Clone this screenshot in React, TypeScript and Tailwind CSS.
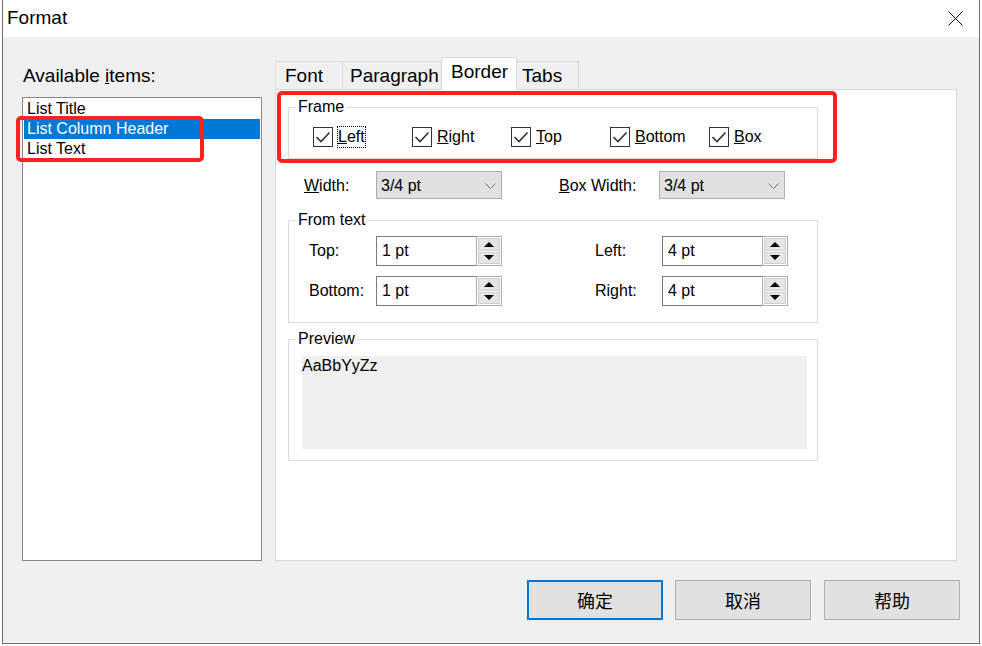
import React from "react";

const sans = "font-['Liberation_Sans',Arial,sans-serif]";

const Check = () => (
  <div className="w-[20px] h-[20px] border border-[#333333] bg-white flex items-center justify-center">
    <svg width="18" height="18" viewBox="0 0 18 18">
      <path d="M2.5 9 L7 13.5 L15.5 4.5" fill="none" stroke="#333333" strokeWidth="1.6" />
    </svg>
  </div>
);

const CheckItem = ({ first, rest, focus }: { first: string; rest: string; focus?: boolean }) => (
  <div className="flex items-center w-[99px]">
    <Check />
    {focus ? (
      <span className="ml-[4px] border border-dotted border-black leading-[20px] text-[16px]">
        <u>{first}</u>
        {rest}
      </span>
    ) : (
      <span className="ml-[5px] leading-[20px] text-[16px]">
        <u>{first}</u>
        {rest}
      </span>
    )}
  </div>
);

const Chevron = () => (
  <svg width="11" height="6" viewBox="0 0 11 6">
    <path d="M0.5 0.5 L5.5 5.5 L10.5 0.5" fill="none" stroke="#707070" strokeWidth="1" />
  </svg>
);

const Dropdown = ({ value }: { value: string }) => (
  <div className="w-[126px] h-[28px] bg-[#e1e1e1] border border-[#adadad] flex items-center justify-between pl-[4px] pr-[5px] pt-[2px] text-[16px]">
    <span>{value}</span>
    <Chevron />
  </div>
);

const Spin = ({ value }: { value: string }) => (
  <div className="w-[126px] h-[30px] flex">
    <div className="flex-1 border border-r-0 border-[#7a7a7a] bg-white flex items-center pl-[5px] text-[16px]">
      {value}
    </div>
    <div className="w-[26px] border border-[#adadad] bg-white flex flex-col p-[1px] gap-[1px]">
      <div className="flex-1 bg-[#e5e5e5] border border-[#cfcfcf] flex items-center justify-center">
        <svg width="10" height="5" viewBox="0 0 10 5">
          <path d="M0 5 L5 0 L10 5 Z" fill="#000" />
        </svg>
      </div>
      <div className="flex-1 bg-[#e5e5e5] border border-[#cfcfcf] flex items-center justify-center">
        <svg width="10" height="5" viewBox="0 0 10 5">
          <path d="M0 0 L10 0 L5 5 Z" fill="#000" />
        </svg>
      </div>
    </div>
  </div>
);

const Group = ({ label, className, children }: { label: string; className: string; children: React.ReactNode }) => (
  <div className={`relative ml-[12px] w-[530px] border border-[#dcdcdc] ${className}`}>
    <span className="absolute left-[7px] top-[-11px] px-[2px] bg-white text-[16px] leading-[20px]">{label}</span>
    {children}
  </div>
);

const App = () => {
  const tabs = [
    { name: "Font", cls: "w-[67px] h-[28px] pl-[9px] pt-[2px] border-l border-t bg-[#f0f0f0]" },
    { name: "Paragraph", cls: "w-[99px] h-[28px] pl-[7px] pt-[2px] border-l border-t bg-[#f0f0f0]" },
    { name: "Border", cls: "w-[76px] h-[33px] pl-[9px] pb-[3px] border-l border-t border-r bg-white -mb-px relative z-10" },
    { name: "Tabs", cls: "w-[62px] h-[28px] pl-[5px] pt-[2px] border-t border-r bg-[#f0f0f0]" },
  ];

  return (
    <div className={`relative w-[982px] h-[646px] bg-white overflow-hidden text-black ${sans}`}>
      <div className="ml-[2px] w-[978px] h-[644px] border-l border-r border-b border-[#707070] flex flex-col">
        {/* title bar */}
        <div className="h-[37px] bg-white flex items-center justify-between pl-[4px] pr-[16px]">
          <span className="text-[19px]">Format</span>
          <svg width="15" height="15" viewBox="0 0 15 15">
            <path d="M0.5 0.5 L14.5 14.5 M14.5 0.5 L0.5 14.5" stroke="#000" strokeWidth="1" />
          </svg>
        </div>

        <div className="flex-1 bg-[#f0f0f0] flex flex-col">
          <div className="flex pt-[20px]">
            {/* left column */}
            <div className="ml-[19px] w-[240px] flex flex-col">
              <div className="mt-[9px] h-[20px] leading-[20px] text-[19px] pl-[1px]">
                Available <u>i</u>tems:
              </div>
              <div className="mt-[11px] h-[464px] border border-[#828790] bg-white p-[1px] text-[16px]">
                <div className="h-[20px] leading-[20px] pl-[3px]">List Title</div>
                <div className="h-[20px] leading-[20px] pl-[3px] bg-[#0078d7] text-white">List Column Header</div>
                <div className="h-[20px] leading-[20px] pl-[3px]">List Text</div>
              </div>
            </div>

            {/* right column */}
            <div className="ml-[13px] w-[682px] flex flex-col">
              <div className="h-[32px] flex items-end">
                {tabs.map((t) => (
                  <div key={t.name} className={`${t.cls} border-[#d9d9d9] flex items-center text-[19px]`}>
                    {t.name}
                  </div>
                ))}
              </div>
              <div className="h-[472px] border border-[#d9d9d9] bg-white flex flex-col">
                <Group label="Frame" className="mt-[17px] h-[52px] pt-[18px] pl-[24px]">
                  <div className="flex">
                    <CheckItem first="L" rest="eft" focus />
                    <CheckItem first="R" rest="ight" />
                    <CheckItem first="T" rest="op" />
                    <CheckItem first="B" rest="ottom" />
                    <CheckItem first="B" rest="ox" />
                  </div>
                </Group>

                <div className="mt-[12px] ml-[28px] h-[28px] flex items-center text-[16px]">
                  <span className="w-[72px] pt-[2px]">
                    <u>W</u>idth:
                  </span>
                  <Dropdown value="3/4 pt" />
                  <span className="ml-[57px] w-[100px] pt-[2px]">
                    <u>B</u>ox Width:
                  </span>
                  <Dropdown value="3/4 pt" />
                </div>

                <Group label="From text" className="mt-[21px] h-[103px] pt-[15px] pl-[20px]">
                  <div className="flex flex-col gap-[10px] text-[16px]">
                    <div className="flex items-center">
                      <span className="w-[67px]">Top:</span>
                      <Spin value="1 pt" />
                      <span className="ml-[93px] w-[67px]">Left:</span>
                      <Spin value="4 pt" />
                    </div>
                    <div className="flex items-center">
                      <span className="w-[67px]">Bottom:</span>
                      <Spin value="1 pt" />
                      <span className="ml-[93px] w-[67px]">Right:</span>
                      <Spin value="4 pt" />
                    </div>
                  </div>
                </Group>

                <Group label="Preview" className="mt-[16px] h-[122px] pt-[16px] pl-[13px]">
                  <div className="w-[505px] h-[93px] bg-[#f0f0f0] text-[16px] leading-[20px]">AaBbYyZz</div>
                </Group>
              </div>
            </div>
          </div>

          {/* buttons */}
          <div className="mt-[19px] ml-[524px] flex font-['Noto_Sans_CJK_SC',sans-serif] text-[18px]">
            <button className="w-[136px] h-[40px] border-2 border-[#0078d7] bg-[#e1e1e1]">确定</button>
            <button className="ml-[12px] w-[136px] h-[40px] border border-[#adadad] bg-[#e1e1e1]">取消</button>
            <button className="ml-[13px] w-[136px] h-[40px] border border-[#adadad] bg-[#e1e1e1]">帮助</button>
          </div>
        </div>
      </div>

      {/* red annotation boxes */}
      <div className="absolute left-[16px] top-[116px] w-[188px] h-[46px] border-[4px] border-[#ff2020] rounded-[5px]" />
      <div className="absolute left-[277px] top-[91px] w-[560px] h-[72px] border-[4px] border-[#ff2020] rounded-[5px]" />
    </div>
  );
};

export default App;
